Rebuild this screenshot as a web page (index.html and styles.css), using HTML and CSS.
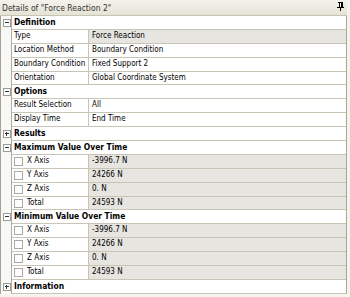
FILE: index.html
```html
<!DOCTYPE html>
<html>
<head>
<meta charset="utf-8">
<link rel="stylesheet" href="styles.css">
</head>
<body>
<div class="panel">
  <div class="titlebar">
    <span class="title">Details of "Force Reaction 2"</span>
    <svg class="pin" width="7" height="9" viewBox="0 0 7 9">
      <rect x="1" y="0" width="5" height="1" fill="#000"/>
      <rect x="2" y="1" width="1" height="4" fill="#000"/>
      <rect x="3" y="1" width="1" height="4" fill="#fff"/>
      <rect x="4" y="1" width="2" height="4" fill="#000"/>
      <rect x="0" y="5" width="7" height="1" fill="#000"/>
      <rect x="3" y="6" width="1" height="3" fill="#000"/>
    </svg>
  </div>
  <div class="grid">
    <div class="row head"><div class="gut"><span class="tog minus"></span></div><div class="hcell">Definition</div></div>
    <div class="row"><div class="gut"></div><div class="cells"><div class="name">Type</div><div class="val ro">Force Reaction</div></div></div>
    <div class="row"><div class="gut"></div><div class="cells"><div class="name">Location Method</div><div class="val">Boundary Condition</div></div></div>
    <div class="row"><div class="gut"></div><div class="cells"><div class="name">Boundary Condition</div><div class="val">Fixed Support 2</div></div></div>
    <div class="row"><div class="gut"></div><div class="cells"><div class="name">Orientation</div><div class="val">Global Coordinate System</div></div></div>

    <div class="row head"><div class="gut"><span class="tog minus"></span></div><div class="hcell">Options</div></div>
    <div class="row"><div class="gut"></div><div class="cells"><div class="name">Result Selection</div><div class="val">All</div></div></div>
    <div class="row"><div class="gut"></div><div class="cells"><div class="name">Display Time</div><div class="val">End Time</div></div></div>

    <div class="row head"><div class="gut"><span class="tog plus"></span></div><div class="hcell">Results</div></div>

    <div class="row head"><div class="gut"><span class="tog minus"></span></div><div class="hcell">Maximum Value Over Time</div></div>
    <div class="row"><div class="gut"></div><div class="cells"><div class="name chk"><span class="box"></span>X Axis</div><div class="val ro">-3996.7 N</div></div></div>
    <div class="row"><div class="gut"></div><div class="cells"><div class="name chk"><span class="box"></span>Y Axis</div><div class="val ro">24266 N</div></div></div>
    <div class="row"><div class="gut"></div><div class="cells"><div class="name chk"><span class="box"></span>Z Axis</div><div class="val ro">0. N</div></div></div>
    <div class="row"><div class="gut"></div><div class="cells"><div class="name chk"><span class="box"></span>Total</div><div class="val ro">24593 N</div></div></div>

    <div class="row head"><div class="gut"><span class="tog minus"></span></div><div class="hcell">Minimum Value Over Time</div></div>
    <div class="row"><div class="gut"></div><div class="cells"><div class="name chk"><span class="box"></span>X Axis</div><div class="val ro">-3996.7 N</div></div></div>
    <div class="row"><div class="gut"></div><div class="cells"><div class="name chk"><span class="box"></span>Y Axis</div><div class="val ro">24266 N</div></div></div>
    <div class="row"><div class="gut"></div><div class="cells"><div class="name chk"><span class="box"></span>Z Axis</div><div class="val ro">0. N</div></div></div>
    <div class="row"><div class="gut"></div><div class="cells"><div class="name chk"><span class="box"></span>Total</div><div class="val ro">24593 N</div></div></div>

    <div class="row head"><div class="gut"><span class="tog plus"></span></div><div class="hcell">Information</div></div>
  </div>
</div>
</body>
</html>
```
FILE: styles.css
```css
html, body {
  margin: 0;
  padding: 0;
  background: #f5f4ee;
}
body {
  font-family: "DejaVu Sans Condensed", "DejaVu Sans", sans-serif;
  font-stretch: semi-condensed;
  color: #000;
}
.panel {
  width: 350px;
  height: 297px;
  box-sizing: border-box;
  padding-right: 3px;
  background: #f5f4ee;
  overflow: hidden;
}
.titlebar {
  height: 15px;
  border-bottom: 1px solid #c7c4b4;
  background: linear-gradient(#f4f3ec, #e5e3d6);
  display: flex;
  align-items: center;
  justify-content: space-between;
  padding: 0 3px 0 2px;
  font-size: 8.5px;
  color: #333;
}
.pin {
  display: block;
  margin-top: -2px;
}
.grid {
  border-left: 1px solid #a4a297;
  border-right: 1px solid #aaa79a;
  background: #fff;
}
.row {
  display: flex;
  height: 13.9px;
}
.gut {
  width: 10px;
  border-right: 1px solid #aeaca2;
  background: #f8f8f5;
  position: relative;
  flex: none;
}
.cells {
  flex: 1;
  display: grid;
  grid-template-columns: 77px 1fr;
  border-bottom: 1px solid #c8c5b6;
  font-size: 8px;
  line-height: 12.9px;
}
.name {
  box-sizing: border-box;
  border-right: 1px solid #c8c5b6;
  padding-left: 2px;
  white-space: nowrap;
  overflow: hidden;
  background: #fff;
}
.val {
  padding-left: 3px;
  white-space: nowrap;
  overflow: hidden;
  background: #fff;
}
.val.ro {
  background: #e6e5e0;
}
.chk {
  display: flex;
  align-items: center;
  gap: 4px;
}
.box {
  width: 7px;
  height: 7px;
  border: 1px solid #a9a9a4;
  background: #fff;
  flex: none;
}
.hcell {
  flex: 1;
  border-bottom: 1px solid #c8c5b6;
  padding-left: 2px;
  font-size: 8.4px;
  font-weight: bold;
  line-height: 12.9px;
  white-space: nowrap;
  background: #fff;
}
.tog {
  position: absolute;
  left: 2px;
  top: 3px;
  width: 6px;
  height: 6px;
  border: 1px solid #9c9c96;
  background: #fff;
}
.tog::before {
  content: "";
  position: absolute;
  left: 1px;
  top: 2px;
  width: 4px;
  height: 1px;
  background: #333;
}
.tog.plus::after {
  content: "";
  position: absolute;
  left: 2px;
  top: 1px;
  width: 1px;
  height: 4px;
  background: #333;
}
```
